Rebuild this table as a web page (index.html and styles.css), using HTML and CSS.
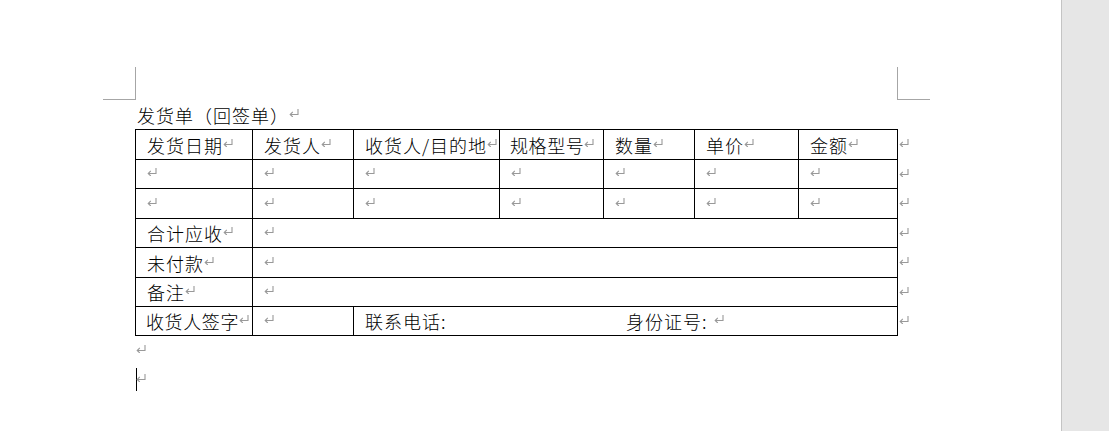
FILE: index.html
```html
<!DOCTYPE html>
<html lang="zh">
<head>
<meta charset="utf-8">
<title>发货单（回签单）</title>
<link rel="stylesheet" href="styles.css">
</head>
<body>
<svg class="defs" width="0" height="0" aria-hidden="true">
  <symbol id="pm" viewBox="0 0 10 8">
    <path d="M9 0 V5.5 H1.2 M3.8 2.8 L1.2 5.5 L3.8 8" fill="none" stroke="currentColor" stroke-width="1.1"/>
  </symbol>
</svg>
<div class="doc">
  <div class="corners">
    <div class="corner corner-left"></div>
    <div class="corner corner-right"></div>
  </div>
  <div class="title">发货单（回签单）<svg class="pm"><use href="#pm"/></svg></div>
  <div class="tablewrap">
    <div class="tbl">
      <div class="cell">发货日期<svg class="pm"><use href="#pm"/></svg></div>
      <div class="cell">发货人<svg class="pm"><use href="#pm"/></svg></div>
      <div class="cell">收货人/目的地<svg class="pm"><use href="#pm"/></svg></div>
      <div class="cell tight">规格型号<svg class="pm"><use href="#pm"/></svg></div>
      <div class="cell">数量<svg class="pm"><use href="#pm"/></svg></div>
      <div class="cell">单价<svg class="pm"><use href="#pm"/></svg></div>
      <div class="cell">金额<svg class="pm"><use href="#pm"/></svg></div>

      <div class="cell"><svg class="pm"><use href="#pm"/></svg></div>
      <div class="cell"><svg class="pm"><use href="#pm"/></svg></div>
      <div class="cell"><svg class="pm"><use href="#pm"/></svg></div>
      <div class="cell"><svg class="pm"><use href="#pm"/></svg></div>
      <div class="cell"><svg class="pm"><use href="#pm"/></svg></div>
      <div class="cell"><svg class="pm"><use href="#pm"/></svg></div>
      <div class="cell"><svg class="pm"><use href="#pm"/></svg></div>

      <div class="cell"><svg class="pm"><use href="#pm"/></svg></div>
      <div class="cell"><svg class="pm"><use href="#pm"/></svg></div>
      <div class="cell"><svg class="pm"><use href="#pm"/></svg></div>
      <div class="cell"><svg class="pm"><use href="#pm"/></svg></div>
      <div class="cell"><svg class="pm"><use href="#pm"/></svg></div>
      <div class="cell"><svg class="pm"><use href="#pm"/></svg></div>
      <div class="cell"><svg class="pm"><use href="#pm"/></svg></div>

      <div class="cell">合计应收<svg class="pm"><use href="#pm"/></svg></div>
      <div class="cell span-rest"><svg class="pm"><use href="#pm"/></svg></div>

      <div class="cell">未付款<svg class="pm"><use href="#pm"/></svg></div>
      <div class="cell span-rest"><svg class="pm"><use href="#pm"/></svg></div>

      <div class="cell">备注<svg class="pm"><use href="#pm"/></svg></div>
      <div class="cell span-rest"><svg class="pm"><use href="#pm"/></svg></div>

      <div class="cell tight">收货人签字<svg class="pm"><use href="#pm"/></svg></div>
      <div class="cell"><svg class="pm"><use href="#pm"/></svg></div>
      <div class="cell span-contact"><span class="phone">联系电话:</span><span>身份证号: </span><svg class="pm"><use href="#pm"/></svg></div>
    </div>
    <div class="eol">
      <div class="eol-cell"><svg class="pm"><use href="#pm"/></svg></div>
      <div class="eol-cell"><svg class="pm"><use href="#pm"/></svg></div>
      <div class="eol-cell"><svg class="pm"><use href="#pm"/></svg></div>
      <div class="eol-cell"><svg class="pm"><use href="#pm"/></svg></div>
      <div class="eol-cell"><svg class="pm"><use href="#pm"/></svg></div>
      <div class="eol-cell"><svg class="pm"><use href="#pm"/></svg></div>
      <div class="eol-cell"><svg class="pm"><use href="#pm"/></svg></div>
    </div>
  </div>
  <div class="para"><svg class="pm"><use href="#pm"/></svg></div>
  <div class="para"><span class="caret"></span><svg class="pm"><use href="#pm"/></svg></div>
</div>
<div class="scrollbar"></div>
</body>
</html>
```

FILE: styles.css
```css
html, body {
  margin: 0;
  padding: 0;
  background: #ffffff;
}

body {
  display: flex;
  width: 1109px;
  height: 431px;
  overflow: hidden;
  font-family: "Noto Sans CJK SC", "Noto Sans", sans-serif;
  font-weight: 300;
  color: #000;
}

.defs {
  position: absolute;
  width: 0;
  height: 0;
}

.doc {
  flex: 1;
  padding-top: 67px;
}

.scrollbar {
  width: 47px;
  height: 431px;
  background: #e6e6e6;
  border-left: 1px solid #c4c4c4;
}

.corners {
  display: flex;
  margin-left: 103px;
  width: 827px;
}

.corner {
  width: 33px;
  height: 33px;
  box-sizing: border-box;
  border-bottom: 1px solid #a6a6a6;
}

.corner-left {
  border-right: 1px solid #a6a6a6;
}

.corner-right {
  margin-left: auto;
  border-left: 1px solid #a6a6a6;
}

.title {
  height: 29px;
  margin-left: 137px;
  display: flex;
  align-items: center;
  font-size: 18px;
  line-height: 1;
  letter-spacing: 1px;
}

.pm {
  width: 10px;
  height: 8px;
  flex: none;
  color: #999999;
  margin-bottom: 4px;
}

.tablewrap {
  display: flex;
  margin-left: 135px;
}

.tbl {
  display: grid;
  grid-template-columns: 117px 101px 146px 104px 91px 104px 99px;
  grid-template-rows: 30px 29px 30px 29px 30px 29px 29px;
  border-left: 1px solid #000;
  border-top: 1px solid #000;
}

.cell {
  box-sizing: border-box;
  border-right: 1px solid #000;
  border-bottom: 1px solid #000;
  display: flex;
  align-items: center;
  padding-left: 11px;
  font-size: 18px;
  line-height: 1;
  letter-spacing: 1px;
  white-space: nowrap;
  overflow: hidden;
}

.cell.tight {
  padding-left: 10px;
  letter-spacing: 0.6px;
}

.span-rest {
  grid-column: 2 / 8;
}

.span-contact {
  grid-column: 3 / 8;
}

.phone {
  width: 261px;
  flex: none;
}

.span-contact .pm {
  margin-left: 6px;
}

.eol {
  display: grid;
  grid-template-rows: 30px 29px 30px 29px 30px 29px 29px;
  margin-top: 1px;
  padding-left: 1px;
}

.eol-cell {
  display: flex;
  align-items: center;
}

.para {
  height: 29px;
  margin-left: 136px;
  display: flex;
  align-items: center;
}

.caret {
  width: 1px;
  height: 23px;
  background: #000;
  margin-right: -1px;
  flex: none;
}
```
